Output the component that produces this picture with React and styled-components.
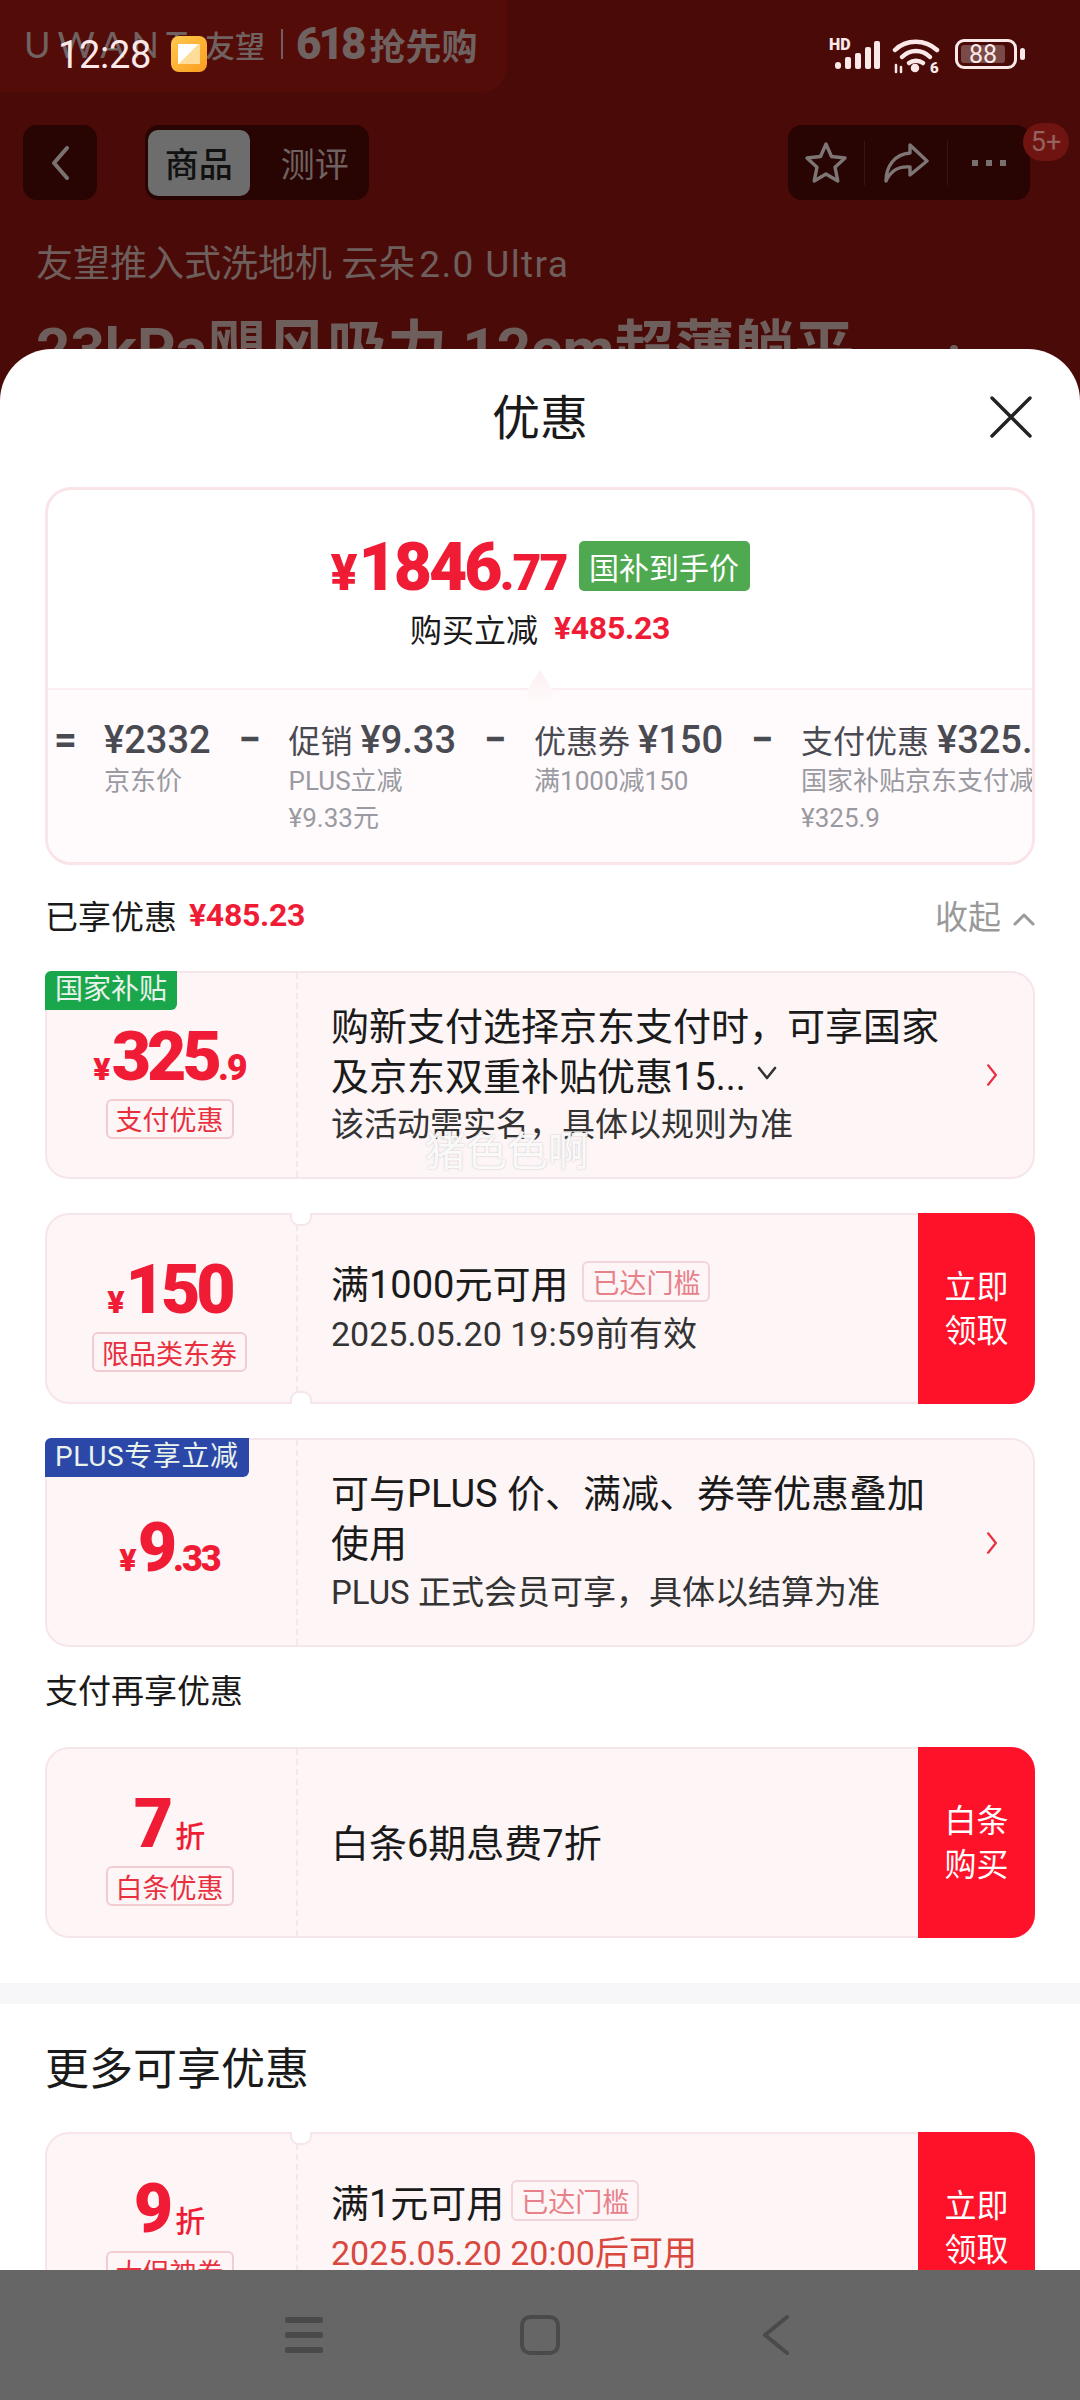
import React from 'react';
import styled, { createGlobalStyle } from 'styled-components';

const FONT = '"Roboto", "Noto Sans CJK SC", sans-serif';

const Global = createGlobalStyle`
  html, body {
    margin: 0;
    padding: 0;
    background: #460a08;
  }
  * {
    box-sizing: border-box;
  }
`;

const Screen = styled.div`
  position: relative;
  width: 1080px;
  height: 2400px;
  overflow: hidden;
  background: #4a0b08;
  font-family: ${FONT};
  color: #1a1a1a;
`;

/* dimmed product page behind the sheet */
const Promo = styled.div`
  display: flex;
  align-items: center;
  width: 507px;
  height: 92px;
  padding: 0 0 4px 24px;
  background: #540c08;
  border-bottom-right-radius: 26px;
  color: #6f6260;
  white-space: nowrap;
`;

const PromoLogo = styled.span`
  width: 181px;
  font-family: "Lato", sans-serif;
  font-size: 36px;
  letter-spacing: 7px;
  font-weight: 400;
`;

const PromoText = styled.span`
  font-size: ${(p) => p.$size || 30}px;
  font-weight: ${(p) => p.$weight || 500};
`;

const PromoBar = styled.span`
  width: 2px;
  height: 30px;
  margin: 0 13px 0 16px;
  background: #6f6260;
`;

const PromoBig = styled.span`
  font-size: 44px;
  font-weight: 900;
  letter-spacing: -3px;
  margin-right: 6px;
`;

const TopBar = styled.div`
  display: flex;
  align-items: center;
  height: 75px;
  margin-top: 33px;
  padding: 0 50px 0 23px;
`;

const DarkBox = styled.div`
  position: relative;
  display: flex;
  align-items: center;
  height: 75px;
  background: #280503;
  border-radius: 14px;
`;

const BackBox = styled(DarkBox)`
  justify-content: center;
  width: 74px;
  margin-right: 48px;
`;

const TabBox = styled(DarkBox)`
  width: 224px;
  padding: 0 3px;
`;

const Tab = styled.div`
  display: flex;
  align-items: center;
  justify-content: center;
  width: ${(p) => (p.$on ? '103px' : '118px')};
  height: 66px;
  padding-left: ${(p) => (p.$on ? 0 : 14)}px;
  border-radius: 10px;
  font-size: 34px;
  background: ${(p) => (p.$on ? '#6d6d6d' : 'transparent')};
  color: ${(p) => (p.$on ? '#111111' : '#6f6260')};
  font-weight: ${(p) => (p.$on ? 500 : 400)};
`;

const ActionBox = styled(DarkBox)`
  width: 242px;
  margin-left: auto;
`;

const ActionCell = styled.div`
  display: flex;
  align-items: center;
  justify-content: center;
  width: ${(p) => p.$w}px;
  height: 44px;
  border-right: ${(p) => (p.$line ? '1px solid #3d1412' : 'none')};
`;

const Badge = styled.span`
  position: absolute;
  top: -2px;
  right: -39px;
  width: 46px;
  height: 38px;
  border-radius: 19px;
  background: #701411;
  color: #94625f;
  font-size: 27px;
  line-height: 38px;
  text-align: center;
`;

const PageTitle = styled.div`
  margin-top: 40px;
  padding-left: 36px;
  font-size: 37px;
  line-height: 50px;
  color: #6f5f5c;
  white-space: nowrap;
`;

const TitleLatin = styled.span`
  letter-spacing: 1.4px;
  margin-left: 4px;
`;

const PageHeadline = styled.div`
  display: flex;
  align-items: flex-start;
  margin-top: 22px;
  padding-left: 36px;
  font-size: 60px;
  font-weight: 700;
  line-height: 76px;
  color: #6f5f5c;
  white-space: nowrap;
`;

const HeadlineDot = styled.span`
  width: 8px;
  height: 8px;
  margin: 33px 0 0 96px;
  border-radius: 50%;
  background: #6f5f5c;
`;

/* status bar lies over the promo strip */
const StatusBar = styled.div`
  position: absolute;
  top: 0;
  left: 0;
  right: 0;
  height: 92px;
  display: flex;
  align-items: flex-start;
  padding: 31px 58px 0 58px;
  color: #fbe9e9;
`;

const Clock = styled.span`
  font-family: "Roboto", sans-serif;
  font-size: 38px;
  line-height: 48px;
  width: 113px;
  letter-spacing: -0.3px;
`;

const AppIcon = styled.span`
  position: relative;
  width: 36px;
  height: 36px;
  margin-top: 5px;
  border-radius: 8px;
  background: linear-gradient(135deg, #ffc94f, #fa9d1e);
  &::after {
    content: '';
    position: absolute;
    left: 7px;
    top: 8px;
    width: 22px;
    height: 20px;
    background: linear-gradient(135deg, #fff 50%, #ffdc9a 50%);
  }
`;

const StatusIcons = styled.div`
  display: flex;
  align-items: flex-start;
  gap: 11px;
  width: 193px;
  height: 40px;
  margin: 7px 0 0 auto;
`;

const Battery = styled.div`
  position: relative;
  width: 62px;
  height: 30px;
  margin: 1px 0 0 4px;
  padding: 3px;
  border: 3px solid #fbe9e9;
  border-radius: 9px;
  &::after {
    content: '';
    position: absolute;
    right: -11px;
    top: 6px;
    width: 5px;
    height: 12px;
    border-radius: 3px;
    background: #fbe9e9;
  }
`;

const BatteryFill = styled.div`
  width: 88%;
  height: 100%;
  background: #7a4a48;
  border-radius: 3px;
  display: flex;
  align-items: center;
  justify-content: center;
  font-size: 25px;
  line-height: 1;
  color: #fbe9e9;
`;

/* sheet */
const Sheet = styled.div`
  position: absolute;
  top: 349px;
  left: 0;
  right: 0;
  bottom: 0;
  background: #ffffff;
  border-radius: 52px 52px 0 0;
  overflow: hidden;
`;

const SheetHead = styled.div`
  position: relative;
  display: flex;
  align-items: center;
  justify-content: center;
  height: 138px;
  padding-top: 2px;
  font-size: 48px;
  line-height: 1;
`;

const CloseWrap = styled.span`
  position: absolute;
  right: 48px;
  top: 47px;
  display: flex;
`;

const Body = styled.div`
  padding: 0 45px;
`;

const PriceCard = styled.div`
  height: 378px;
  border: 3px solid #fae4e8;
  border-radius: 26px;
  overflow: hidden;
`;

const PriceTop = styled.div`
  height: 198px;
  padding-top: 51px;
  display: flex;
  flex-direction: column;
  align-items: center;
`;

const PriceLine = styled.div`
  display: flex;
  align-items: center;
  height: 50px;
`;

const BigPrice = styled.div`
  display: flex;
  align-items: baseline;
  padding-top: 8px;
  color: #f01c35;
  font-weight: 900;
  line-height: 56px;
  white-space: nowrap;
`;

const PriceYen = styled.span`
  font-size: ${(p) => p.$size}px;
  margin-right: 1px;
`;

const PriceInt = styled.span`
  font-size: ${(p) => p.$size}px;
  letter-spacing: ${(p) => p.$track || -3}px;
`;

const PriceDec = styled.span`
  font-size: ${(p) => p.$size}px;
  letter-spacing: ${(p) => p.$track || -2}px;
`;

const GreenTag = styled.span`
  display: flex;
  align-items: center;
  justify-content: center;
  width: 171px;
  height: 50px;
  margin-left: 12px;
  border-radius: 5px;
  background: #4fa950;
  color: #ffffff;
  font-size: 30px;
`;

const SaveLine = styled.div`
  display: flex;
  align-items: center;
  margin-top: 12px;
  height: 50px;
  font-size: 32px;
`;

const RedAmount = styled.span`
  margin-left: ${(p) => p.$gap}px;
  color: #f01c35;
  font-size: 32px;
  font-weight: 700;
  letter-spacing: -0.3px;
`;

const PriceBottom = styled.div`
  position: relative;
  height: 174px;
  padding: 30px 0 0 6px;
  display: flex;
  align-items: flex-start;
  gap: 28px;
  background: #fffafb;
  border-top: 2px solid #fbeef0;
  white-space: nowrap;
  &::before {
    content: '';
    position: absolute;
    left: 479px;
    top: -20px;
    width: 26px;
    height: 34px;
    background: linear-gradient(#fdf0f2, #fffafb);
    clip-path: polygon(50% 0, 100% 60%, 100% 100%, 0 100%, 0 60%);
  }
`;

const Operator = styled.span`
  width: 22px;
  font-size: 40px;
  line-height: 40px;
  font-weight: 700;
  color: #4a4a52;
  text-align: center;
`;

const Part = styled.div`
  display: flex;
  flex-direction: column;
  flex-shrink: 0;
`;

const PartMain = styled.div`
  font-size: 32px;
  line-height: 40px;
  color: #4a4a52;
`;

const PartAmount = styled.span`
  font-size: 38px;
  font-weight: 500;
`;

const PartSub = styled.div`
  font-size: 26px;
  line-height: 37px;
  color: #9a9aa2;
  margin-top: ${(p) => (p.$last ? 0 : 1)}px;
`;

const SumRow = styled.div`
  display: flex;
  align-items: center;
  justify-content: space-between;
  height: 50px;
  margin-top: 25px;
  font-size: 33px;
`;

const SumLeft = styled.div`
  display: flex;
  align-items: center;
`;

const Collapse = styled.div`
  display: flex;
  align-items: center;
  gap: 12px;
  color: #999999;
  svg {
    margin-top: 8px;
  }
`;

const Card = styled.div`
  position: relative;
  display: flex;
  height: ${(p) => p.$h}px;
  margin-top: ${(p) => p.$top}px;
  background: #fdf5f6;
  border: 2px solid #f6e6e9;
  border-radius: 24px;
  &::before,
  &::after {
    content: ${(p) => (p.$notch ? "''" : 'none')};
    position: absolute;
    left: 243px;
    width: 18px;
    height: 11px;
    background: #ffffff;
    border: 2px solid #f6e6e9;
  }
  &::before {
    top: -2px;
    border-top: none;
    border-radius: 0 0 9px 9px;
  }
  &::after {
    bottom: -2px;
    border-bottom: none;
    border-radius: 9px 9px 0 0;
  }
`;

const CornerTag = styled.span`
  position: absolute;
  top: -2px;
  left: -2px;
  height: 39px;
  padding: 0 10px;
  border-radius: 6px 0 6px 0;
  background: ${(p) => p.$bg};
  color: #e9f3ec;
  font-size: 28px;
  letter-spacing: ${(p) => p.$track || 0}px;
  line-height: 38px;
  white-space: nowrap;
`;

const CardLeft = styled.div`
  flex: 0 0 251px;
  display: flex;
  flex-direction: column;
  align-items: center;
  justify-content: center;
  gap: 15px;
  padding: ${(p) => (p.$solo ? 4 : 12)}px 4px 0 0;
  border-right: 2px dashed #f6e6e9;
`;

const CardPrice = styled.div`
  display: flex;
  align-items: baseline;
  justify-content: center;
  height: 60px;
  line-height: 66px;
  color: #f01c35;
  font-weight: 900;
  white-space: nowrap;
`;

const DiscountUnit = styled.span`
  margin-left: 6px;
  font-size: 30px;
  font-weight: 500;
`;

const LabelTag = styled.span`
  display: flex;
  align-items: center;
  height: 40px;
  padding: 0 8px;
  border: 2px solid #f2ccd0;
  border-radius: 6px;
  color: #e8303e;
  font-size: 27px;
  white-space: nowrap;
`;

const CardText = styled.div`
  flex: 1;
  display: flex;
  flex-direction: column;
  justify-content: center;
  padding-left: 33px;
`;

const LineBig = styled.div`
  display: flex;
  align-items: center;
  height: 50px;
  padding-bottom: 4px;
  font-size: 38px;
  white-space: nowrap;
`;

const LineSmall = styled.div`
  height: 50px;
  line-height: 50px;
  font-size: ${(p) => p.$size || 33}px;
  color: ${(p) => p.$color || '#333333'};
  white-space: nowrap;
`;

const DoneTag = styled.span`
  display: flex;
  align-items: center;
  height: 41px;
  margin-left: ${(p) => p.$gap}px;
  padding: 0 8px;
  border: 2px solid #f2d5d8;
  border-radius: 6px;
  color: #e8808a;
  font-size: 27px;
`;

const CardArrow = styled.div`
  display: flex;
  align-items: center;
  margin-right: 35px;
`;

const ActionButton = styled.div`
  flex: 0 0 117px;
  margin: -2px -2px -2px 0;
  display: flex;
  align-items: center;
  justify-content: center;
  text-align: center;
  border-radius: 0 24px 24px 0;
  background: #fe1229;
  color: #ffffff;
  font-size: 32px;
  line-height: 44px;
`;

const SectionLabel = styled.div`
  height: 50px;
  margin-top: 20px;
  font-size: 33px;
  line-height: 50px;
`;

const Band = styled.div`
  height: 21px;
  margin-top: 45px;
  background: #f7f7fa;
`;

const MoreTitle = styled.div`
  height: 60px;
  margin-top: 36px;
  font-size: 44px;
  line-height: 60px;
`;

const Watermark = styled.span`
  position: absolute;
  left: 425px;
  top: 1128px;
  font-size: 41px;
  line-height: 48px;
  color: rgba(255, 255, 255, 0.92);
  text-shadow: 0 0 2px rgba(150, 150, 150, 0.55);
  white-space: nowrap;
`;

const NavBar = styled.div`
  position: absolute;
  left: 0;
  right: 0;
  bottom: 0;
  height: 130px;
  display: flex;
  align-items: center;
  justify-content: center;
  gap: 196px;
  background: #666666;
`;

/* icons */
const Chevron = ({ w = 18, h = 34, color = '#7a7272', sw = 4, dir = 'left' }) => (
  <svg width={w} height={h} viewBox="0 0 18 34" fill="none">
    <path
      d={dir === 'left' ? 'M16 2 L3 17 L16 32' : 'M3 2 L15 17 L3 32'}
      stroke={color}
      strokeWidth={sw}
      strokeLinecap="round"
      strokeLinejoin="round"
    />
  </svg>
);

const StarIcon = () => (
  <svg width="44" height="44" viewBox="0 0 44 44" fill="none">
    <path
      d="M22 3 L27.5 15.5 L41 17 L31 26.2 L33.8 40 L22 33 L10.2 40 L13 26.2 L3 17 L16.5 15.5 Z"
      stroke="#7d7674"
      strokeWidth="3.4"
      strokeLinejoin="round"
    />
  </svg>
);

const ShareIcon = () => (
  <svg width="46" height="42" viewBox="0 0 46 42" fill="none">
    <path
      d="M27 3 L44 19 L27 33 L27 25 C17 24 8 28 3 39 C3 24 12 12 27 11 Z"
      stroke="#7d7674"
      strokeWidth="3.4"
      strokeLinejoin="round"
    />
  </svg>
);

const DotsIcon = () => (
  <svg width="34" height="6" viewBox="0 0 34 6">
    <rect x="0" y="0" width="6" height="6" fill="#77706e" />
    <rect x="14" y="0" width="6" height="6" fill="#77706e" />
    <rect x="28" y="0" width="6" height="6" fill="#77706e" />
  </svg>
);

const SignalIcon = () => (
  <svg width="52" height="32" viewBox="0 0 52 32">
    <text x="0" y="12" fontFamily="Roboto, sans-serif" fontWeight="900" fontSize="16" fill="#fbe9e9">HD</text>
    <rect x="6" y="24" width="6" height="7" rx="3" fill="#fbe9e9" />
    <rect x="16" y="19" width="6" height="12" rx="2" fill="#fbe9e9" />
    <rect x="26" y="15" width="6" height="16" rx="2" fill="#fbe9e9" />
    <rect x="36" y="9" width="6" height="22" rx="2" fill="#fbe9e9" />
    <rect x="45" y="3" width="6" height="28" rx="2" fill="#fbe9e9" />
  </svg>
);

const WifiIcon = () => (
  <svg width="48" height="36" viewBox="0 0 48 36" fill="none" stroke="#fbe9e9" strokeWidth="4.5" strokeLinecap="round">
    <path d="M3 12 C14 1 33 1 45 12" />
    <path d="M10 19 C18 11 30 11 38 19" />
    <path d="M17 25 C21 22 27 22 31 25" />
    <circle cx="23" cy="30" r="2" fill="#fbe9e9" />
    <path d="M4 27 L4 34 M9 29 L9 34" strokeWidth="2.5" />
    <text x="38" y="35" fontFamily="Roboto, sans-serif" fontWeight="900" fontSize="15" fill="#fbe9e9" stroke="none">6</text>
  </svg>
);

const CloseIcon = () => (
  <svg width="42" height="42" viewBox="0 0 42 42" fill="none" stroke="#222222" strokeWidth="3.4" strokeLinecap="round">
    <path d="M2 2 L40 40 M40 2 L2 40" />
  </svg>
);

const UpChevron = () => (
  <svg width="22" height="14" viewBox="0 0 22 14" fill="none">
    <path d="M2 12 L11 3 L20 12" stroke="#999999" strokeWidth="3" strokeLinecap="round" strokeLinejoin="round" />
  </svg>
);

const DownChevronSvg = styled.svg`
  margin-left: 10px;
`;

const DownChevron = () => (
  <DownChevronSvg width="22" height="14" viewBox="0 0 22 14" fill="none">
    <path d="M3 2 L11 12 L19 2" stroke="#333333" strokeWidth="2.6" strokeLinecap="round" strokeLinejoin="round" />
  </DownChevronSvg>
);

const MenuIcon = () => (
  <svg width="40" height="40" viewBox="0 0 40 40">
    <rect x="1" y="2" width="38" height="6" rx="2" fill="#4a4a4a" />
    <rect x="1" y="17" width="38" height="6" rx="2" fill="#4a4a4a" />
    <rect x="1" y="32" width="38" height="6" rx="2" fill="#4a4a4a" />
  </svg>
);

const SquareIcon = () => (
  <svg width="40" height="40" viewBox="0 0 40 40" fill="none">
    <rect x="2" y="2" width="36" height="36" rx="8" stroke="#4a4a4a" strokeWidth="4" />
  </svg>
);

const NavBackIcon = () => (
  <svg width="40" height="40" viewBox="0 0 40 40" fill="none">
    <path d="M31 2 L9 20 L31 38" stroke="#4a4a4a" strokeWidth="4" strokeLinecap="round" strokeLinejoin="round" />
  </svg>
);

const Price = ({ yen = 32, int, intSize = 68, dec, decSize = 36, unit }) => (
  <CardPrice>
    {yen > 0 && <PriceYen $size={yen}>¥</PriceYen>}
    <PriceInt $size={intSize} $track={-4}>
      {int}
    </PriceInt>
    {dec && <PriceDec $size={decSize}>{dec}</PriceDec>}
    {unit && <DiscountUnit>{unit}</DiscountUnit>}
  </CardPrice>
);

export default function App() {
  return (
    <Screen>
      <Global />

      <Promo>
        <PromoLogo>UWANT</PromoLogo>
        <PromoText>友望</PromoText>
        <PromoBar />
        <PromoBig>618</PromoBig>
        <PromoText $size={36} $weight={700}>
          抢先购
        </PromoText>
      </Promo>

      <TopBar>
        <BackBox>
          <Chevron />
        </BackBox>
        <TabBox>
          <Tab $on>商品</Tab>
          <Tab>测评</Tab>
        </TabBox>
        <ActionBox>
          <ActionCell $w={77} $line>
            <StarIcon />
          </ActionCell>
          <ActionCell $w={83} $line>
            <ShareIcon />
          </ActionCell>
          <ActionCell $w={82}>
            <DotsIcon />
          </ActionCell>
          <Badge>5+</Badge>
        </ActionBox>
      </TopBar>

      <PageTitle>
        友望推入式洗地机 云朵<TitleLatin>2.0 Ultra</TitleLatin>
      </PageTitle>
      <PageHeadline>
        23kPa飓风吸力 12cm超薄躺平
        <HeadlineDot />
      </PageHeadline>

      <StatusBar>
        <Clock>12:28</Clock>
        <AppIcon />
        <StatusIcons>
          <SignalIcon />
          <WifiIcon />
          <Battery>
            <BatteryFill>88</BatteryFill>
          </Battery>
        </StatusIcons>
      </StatusBar>

      <Sheet>
        <SheetHead>
          优惠
          <CloseWrap>
            <CloseIcon />
          </CloseWrap>
        </SheetHead>

        <Body>
          <PriceCard>
            <PriceTop>
              <PriceLine>
                <BigPrice>
                  <PriceYen $size={50}>¥</PriceYen>
                  <PriceInt $size={66} $track={-3}>
                    1846
                  </PriceInt>
                  <PriceDec $size={50} $track={-2}>
                    .77
                  </PriceDec>
                </BigPrice>
                <GreenTag>国补到手价</GreenTag>
              </PriceLine>
              <SaveLine>
                购买立减
                <RedAmount $gap={16}>¥485.23</RedAmount>
              </SaveLine>
            </PriceTop>
            <PriceBottom>
              <Operator>=</Operator>
              <Part>
                <PartMain>
                  <PartAmount>¥2332</PartAmount>
                </PartMain>
                <PartSub>京东价</PartSub>
              </Part>
              <Operator>−</Operator>
              <Part>
                <PartMain>
                  促销 <PartAmount>¥9.33</PartAmount>
                </PartMain>
                <PartSub>PLUS立减</PartSub>
                <PartSub $last>¥9.33元</PartSub>
              </Part>
              <Operator>−</Operator>
              <Part>
                <PartMain>
                  优惠券 <PartAmount>¥150</PartAmount>
                </PartMain>
                <PartSub>满1000减150</PartSub>
              </Part>
              <Operator>−</Operator>
              <Part>
                <PartMain>
                  支付优惠 <PartAmount>¥325.9</PartAmount>
                </PartMain>
                <PartSub>国家补贴京东支付减</PartSub>
                <PartSub $last>¥325.9</PartSub>
              </Part>
            </PriceBottom>
          </PriceCard>

          <SumRow>
            <SumLeft>
              已享优惠
              <RedAmount $gap={12}>¥485.23</RedAmount>
            </SumLeft>
            <Collapse>
              收起
              <UpChevron />
            </Collapse>
          </SumRow>

          <Card $h={208} $top={31}>
            <CornerTag $bg="#1aa64b">国家补贴</CornerTag>
            <CardLeft>
              <Price int="325" dec=".9" />
              <LabelTag>支付优惠</LabelTag>
            </CardLeft>
            <CardText>
              <LineBig>购新支付选择京东支付时，可享国家</LineBig>
              <LineBig>
                及京东双重补贴优惠15...
                <DownChevron />
              </LineBig>
              <LineSmall>该活动需实名，具体以规则为准</LineSmall>
            </CardText>
            <CardArrow>
              <Chevron w={12} h={22} color="#e8303e" sw={3.4} dir="right" />
            </CardArrow>
          </Card>

          <Card $h={191} $top={34} $notch>
            <CardLeft>
              <Price int="150" />
              <LabelTag>限品类东券</LabelTag>
            </CardLeft>
            <CardText>
              <LineBig>
                满1000元可用
                <DoneTag $gap={14}>已达门槛</DoneTag>
              </LineBig>
              <LineSmall $size={34}>2025.05.20 19:59前有效</LineSmall>
            </CardText>
            <ActionButton>
              立即
              <br />
              领取
            </ActionButton>
          </Card>

          <Card $h={209} $top={34}>
            <CornerTag $bg="#2b47a8" $track={0.6}>
              PLUS专享立减
            </CornerTag>
            <CardLeft $solo>
              <Price int="9" dec=".33" />
            </CardLeft>
            <CardText>
              <LineBig>可与PLUS 价、满减、券等优惠叠加</LineBig>
              <LineBig>使用</LineBig>
              <LineSmall>PLUS 正式会员可享，具体以结算为准</LineSmall>
            </CardText>
            <CardArrow>
              <Chevron w={12} h={22} color="#e8303e" sw={3.4} dir="right" />
            </CardArrow>
          </Card>

          <SectionLabel>支付再享优惠</SectionLabel>

          <Card $h={191} $top={30}>
            <CardLeft>
              <Price yen={0} int="7" unit="折" />
              <LabelTag>白条优惠</LabelTag>
            </CardLeft>
            <CardText>
              <LineBig>白条6期息费7折</LineBig>
            </CardText>
            <ActionButton>
              白条
              <br />
              购买
            </ActionButton>
          </Card>
        </Body>

        <Band />

        <Body>
          <MoreTitle>更多可享优惠</MoreTitle>
          <Card $h={191} $top={32} $notch>
            <CardLeft>
              <Price yen={0} int="9" unit="折" />
              <LabelTag>大促神券</LabelTag>
            </CardLeft>
            <CardText>
              <LineBig>
                满1元可用
                <DoneTag $gap={7}>已达门槛</DoneTag>
              </LineBig>
              <LineSmall $size={34} $color="#d9483f">
                2025.05.20 20:00后可用
              </LineSmall>
            </CardText>
            <ActionButton>
              立即
              <br />
              领取
            </ActionButton>
          </Card>
        </Body>
      </Sheet>

      <Watermark>猪色色啊</Watermark>

      <NavBar>
        <MenuIcon />
        <SquareIcon />
        <NavBackIcon />
      </NavBar>
    </Screen>
  );
}
